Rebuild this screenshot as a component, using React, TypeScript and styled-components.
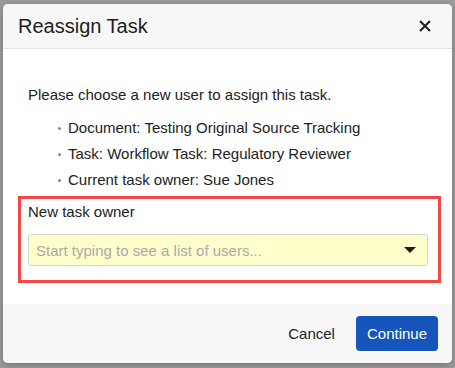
import React from "react";
import styled, { createGlobalStyle } from "styled-components";

const GlobalStyle = createGlobalStyle`
  html, body {
    margin: 0;
    padding: 0;
    background: #9b9b9b;
    font-family: "Liberation Sans", Arial, sans-serif;
    color: #222;
  }
  * { box-sizing: border-box; }
`;

const Page = styled.div`
  width: 455px;
  height: 368px;
  padding: 4px 3px 5px 3px;
`;

const Dialog = styled.div`
  width: 449px;
  height: 359px;
  background: #fff;
  border-radius: 5px;
  overflow: hidden;
  display: flex;
  flex-direction: column;
  box-shadow: 0 2px 6px rgba(0, 0, 0, 0.25);
`;

const Header = styled.div`
  height: 45px;
  flex: none;
  background: #f7f7f7;
  border-bottom: 1px solid #e4e4e4;
  display: flex;
  align-items: center;
  justify-content: space-between;
  padding: 0 20px 0 15px;
`;

const Title = styled.h1`
  margin: 0;
  font-size: 20px;
  font-weight: 400;
  color: #1e1e1e;
  line-height: 24px;
`;

const CloseButton = styled.button`
  border: none;
  background: none;
  padding: 0;
  width: 14px;
  height: 14px;
  display: flex;
  align-items: center;
  justify-content: center;
  cursor: pointer;
`;

const Body = styled.div`
  flex: 1;
  padding: 36px 11px 20px 15px;
  font-size: 15px;
`;

const Intro = styled.p`
  margin: 0 0 10px 10px;
  line-height: 20px;
`;

const Details = styled.ul`
  list-style: none;
  margin: 0 0 3px 0;
  padding: 0 0 0 50px;
`;

const Item = styled.li`
  position: relative;
  line-height: 26px;
  &::before {
    content: "";
    position: absolute;
    left: -10px;
    top: 12px;
    width: 3px;
    height: 3px;
    border-radius: 50%;
    background: #8a8a8a;
  }
`;

const Highlight = styled.div`
  border: 3px solid #f44848;
  padding: 3px 10px 14px 7px;
`;

const Label = styled.label`
  display: block;
  line-height: 20px;
  margin-bottom: 12px;
`;

const Select = styled.div`
  height: 32px;
  background: #ffffcc;
  border: 1px solid #d2d2c0;
  border-radius: 3px;
  display: flex;
  align-items: center;
  justify-content: space-between;
  padding: 0 11px 0 7px;
`;

const Placeholder = styled.span`
  color: #aaaaaa;
  font-size: 15px;
`;

const Caret = styled.span`
  width: 0;
  height: 0;
  border-left: 6px solid transparent;
  border-right: 6px solid transparent;
  border-top: 6px solid #1e1e1e;
`;

const Footer = styled.div`
  height: 59px;
  flex: none;
  background: #f7f7f7;
  display: flex;
  align-items: center;
  justify-content: flex-end;
  gap: 21px;
  padding: 0 14px 0 0;
`;

const Button = styled.button<{ primary?: boolean }>`
  font-family: "Liberation Sans", Arial, sans-serif;
  font-size: 15px;
  height: 35px;
  border-radius: 4px;
  border: none;
  cursor: pointer;
  padding: ${(p) => (p.primary ? "0 11px" : "0")};
  background: ${(p) => (p.primary ? "#1655bb" : "transparent")};
  color: ${(p) => (p.primary ? "#fff" : "#222")};
`;

export default function App() {
  return (
    <>
      <GlobalStyle />
      <Page>
        <Dialog>
          <Header>
            <Title>Reassign Task</Title>
            <CloseButton aria-label="Close">
              <svg width="12" height="12" viewBox="0 0 12 12">
                <path d="M1 1L11 11M11 1L1 11" stroke="#1e1e1e" strokeWidth="2" />
              </svg>
            </CloseButton>
          </Header>
          <Body>
            <Intro>Please choose a new user to assign this task.</Intro>
            <Details>
              <Item>Document: Testing Original Source Tracking</Item>
              <Item>Task: Workflow Task: Regulatory Reviewer</Item>
              <Item>Current task owner: Sue Jones</Item>
            </Details>
            <Highlight>
              <Label>New task owner</Label>
              <Select>
                <Placeholder>Start typing to see a list of users...</Placeholder>
                <Caret />
              </Select>
            </Highlight>
          </Body>
          <Footer>
            <Button>Cancel</Button>
            <Button primary>Continue</Button>
          </Footer>
        </Dialog>
      </Page>
    </>
  );
}
